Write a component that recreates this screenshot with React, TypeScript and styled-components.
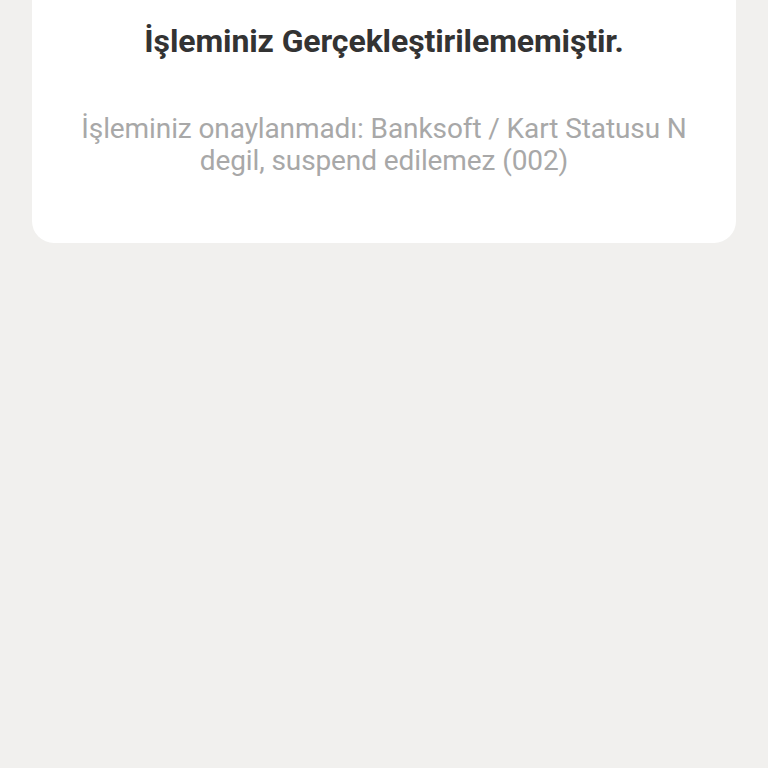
import React from 'react';
import styled, { createGlobalStyle } from 'styled-components';

const GlobalStyle = createGlobalStyle`
  html, body {
    margin: 0;
    padding: 0;
    background: #f1f0ee;
    font-family: Roboto, "Noto Sans", sans-serif;
  }
`;

const Page = styled.div`
  min-height: 768px;
  padding: 0 32px;
  background: #f1f0ee;
`;

const Card = styled.div`
  background: #ffffff;
  border-radius: 0 0 22px 22px;
  padding: 22px 30px 66px;
  display: flex;
  flex-direction: column;
  align-items: center;
  text-align: center;
`;

const Title = styled.h1`
  margin: 0;
  font-size: 32px;
  line-height: 38px;
  font-weight: 700;
  color: #333333;
  letter-spacing: -0.1px;
`;

const Message = styled.p`
  margin: 53px 0 0;
  font-size: 28px;
  line-height: 32px;
  font-weight: 400;
  color: #a8a8a8;
  letter-spacing: -0.1px;
`;

export default function App() {
  return (
    <>
      <GlobalStyle />
      <Page>
        <Card>
          <Title>İşleminiz Gerçekleştirilememiştir.</Title>
          <Message>
            İşleminiz onaylanmadı: Banksoft / Kart Statusu N
            <br />
            degil, suspend edilemez (002)
          </Message>
        </Card>
      </Page>
    </>
  );
}
